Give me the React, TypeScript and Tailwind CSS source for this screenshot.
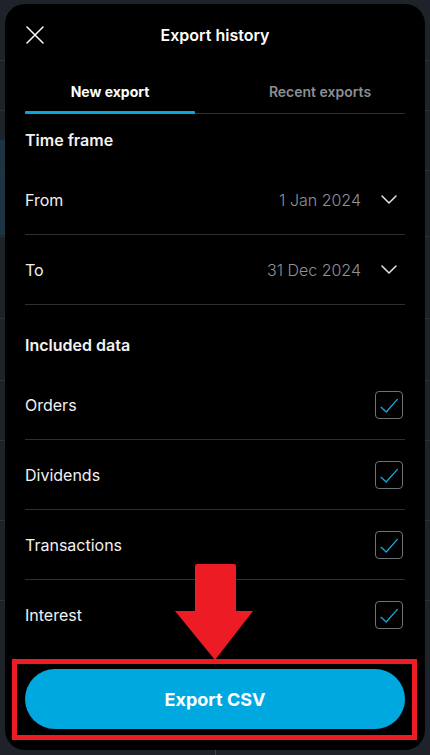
import React from "react";

const font = { fontFamily: "Inter, 'Noto Sans', 'Liberation Sans', sans-serif" };

function Chevron() {
  return (
    <svg width="16" height="9" viewBox="0 0 16 9" fill="none">
      <path d="M1 1l7 7 7-7" stroke="#e6e6e6" strokeWidth="1.5" strokeLinecap="round" strokeLinejoin="round" />
    </svg>
  );
}

function Check() {
  return (
    <div className="w-[28px] h-[28px] rounded-[4px] border border-[#6e7377] flex items-center justify-center mr-[2px]">
      <svg width="28" height="28" viewBox="0 0 28 28" fill="none">
        <path d="M5.5 16.5l5.5 5 12-13.5" stroke="#1ba6dc" strokeWidth="1.4" strokeLinecap="round" strokeLinejoin="round" />
      </svg>
    </div>
  );
}

function DateRow({ label, value, last }: { label: string; value: string; last?: boolean }) {
  return (
    <div className={`h-[70px] flex items-center justify-between ${last ? "" : "border-b border-[#2b3034]"}`}>
      <span className="text-[16px] text-[#f2f2f2]">{label}</span>
      <div className="flex items-center gap-[20px] pr-[8px]">
        <span className="text-[16px] text-[#8f9194] font-light">{value}</span>
        <Chevron />
      </div>
    </div>
  );
}

function CheckRow({ label, last }: { label: string; last?: boolean }) {
  return (
    <div className={`h-[70px] flex items-center justify-between ${last ? "" : "border-b border-[#2b3034]"}`}>
      <span className="text-[16px] text-[#f2f2f2]">{label}</span>
      <Check />
    </div>
  );
}

export default function App() {
  return (
    <div className="relative w-[430px] h-[755px] bg-[#1e232a] overflow-hidden pt-[4px] px-[5px]" style={font}>
      {/* background content peeking */}
      <div className="absolute left-0 top-[60px] w-[430px] h-px bg-[#2c333b]" />
      <div className="absolute left-0 top-[110px] w-[430px] h-px bg-[#2c333b]" />
      <div className="absolute left-0 top-[140px] w-[8px] h-[95px] bg-[#1d3443]" />
      <div className="absolute left-0 top-[170px] w-[430px] h-px bg-[#2c333b]" />
      <div className="absolute left-0 top-[236px] w-[430px] h-px bg-[#2c333b]" />
      <div className="absolute left-0 top-[318px] w-[430px] h-px bg-[#2c333b]" />
      <div className="absolute left-0 top-[380px] w-[430px] h-px bg-[#2c333b]" />
      <div className="absolute left-0 top-[440px] w-[430px] h-px bg-[#2c333b]" />
      <div className="absolute left-0 top-[520px] w-[430px] h-px bg-[#2c333b]" />
      <div className="absolute left-0 top-[600px] w-[430px] h-px bg-[#2c333b]" />
      <div className="absolute left-[215px] top-[748px] w-px h-[7px] bg-[#3a414a]" />

      <div className="relative h-[746px] bg-black rounded-[20px] flex flex-col px-[20px]">
        {/* header */}
        <div className="h-[62px] relative flex items-center justify-center">
          <svg className="absolute left-[1px] top-[22px]" width="18" height="18" viewBox="0 0 18 18" fill="none">
            <path d="M1 1l16 16M17 1L1 17" stroke="#ffffff" strokeWidth="1.5" strokeLinecap="round" />
          </svg>
          <span className="text-[16px] font-semibold text-white">Export history</span>
        </div>

        {/* tabs */}
        <div className="h-[48px] flex border-b border-[#2b3034] relative">
          <div className="w-[170px] relative flex items-center justify-center pt-[4px]">
            <span className="text-[14px] font-bold text-white">New export</span>
            <div className="absolute left-0 right-0 bottom-[-1px] h-[3px] bg-[#0ba5dc] rounded-[1px]" />
          </div>
          <div className="flex-1 flex items-center justify-center pl-[40px] pt-[4px]">
            <span className="text-[14px] font-semibold text-[#8b8f93]">Recent exports</span>
          </div>
        </div>

        {/* time frame */}
        <div className="h-[51px] flex items-end pb-[15px]">
          <span className="text-[16px] leading-[20px] font-semibold text-[#f2f2f2]">Time frame</span>
        </div>
        <DateRow label="From" value="1 Jan 2024" />
        <DateRow label="To" value="31 Dec 2024" />

        {/* included */}
        <div className="h-[65px] flex items-end pb-[15px]">
          <span className="text-[16px] leading-[20px] font-semibold text-[#f2f2f2]">Included data</span>
        </div>
        <CheckRow label="Orders" />
        <CheckRow label="Dividends" />
        <CheckRow label="Transactions" />
        <CheckRow label="Interest" last />

        {/* button */}
        <div className="mt-[19px]">
          <button className="w-full h-[60px] rounded-full bg-[#00a8e0] text-white text-[18px] font-bold">
            Export CSV
          </button>
        </div>
      </div>

      {/* annotation overlay */}
      <div className="absolute left-[12px] top-[659px] w-[405px] h-[81px] border-[5px] border-[#ed1c24]" />
      <svg className="absolute left-[174px] top-[563px]" width="82" height="98" viewBox="0 0 82 98" fill="none">
        <path d="M21 3a2 2 0 0 1 2-2h37a2 2 0 0 1 2 2v45h17L41 97 1 48h20z" fill="#ed1c24" />
      </svg>
    </div>
  );
}
